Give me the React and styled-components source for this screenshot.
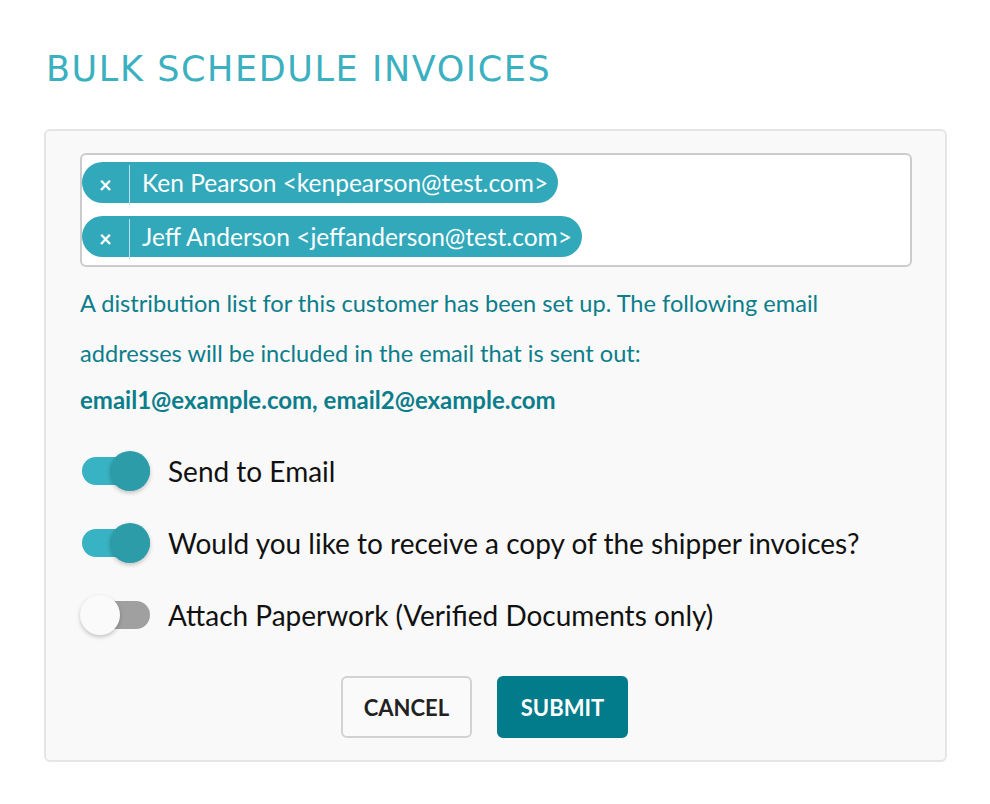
import styled, { createGlobalStyle } from 'styled-components';

const GlobalStyle = createGlobalStyle`
    body {
        margin: 0;
        background: #ffffff;
        font-family: Lato, "Open Sans", sans-serif;
    }
`;

const recipients = [
    { name: 'Ken Pearson', email: 'kenpearson@test.com' },
    { name: 'Jeff Anderson', email: 'jeffanderson@test.com' },
];

const options = [
    { label: 'Send to Email', on: true },
    { label: 'Would you like to receive a copy of the shipper invoices?', on: true },
    { label: 'Attach Paperwork (Verified Documents only)', on: false },
];

export default function App() {
    return (
        <Page>
            <GlobalStyle />
            <Title>BULK SCHEDULE INVOICES</Title>
            <Panel>
                <ChipBox>
                    {recipients.map((r) => (
                        <Chip key={r.email}>
                            <ChipRemove>×</ChipRemove>
                            <ChipLabel>{`${r.name} <${r.email}>`}</ChipLabel>
                        </Chip>
                    ))}
                </ChipBox>
                <Notice>
                    A distribution list for this customer has been set up. The following email
                    addresses will be included in the email that is sent out:
                </Notice>
                <Emails>email1@example.com, email2@example.com</Emails>
                <Options>
                    {options.map((o) => (
                        <OptionRow key={o.label}>
                            <Switch $on={o.on}>
                                <Knob $on={o.on} />
                            </Switch>
                            <OptionLabel>{o.label}</OptionLabel>
                        </OptionRow>
                    ))}
                </Options>
                <Actions>
                    <Button>CANCEL</Button>
                    <Button $primary>SUBMIT</Button>
                </Actions>
            </Panel>
        </Page>
    );
}

const Page = styled.div`
    padding: 46px 43px 40px 44px;
`;

const Title = styled.h1`
    margin: 0 0 37px 2px;
    font-family: "DejaVu Sans", Lato, sans-serif;
    font-weight: 400;
    font-size: 35px;
    line-height: 46px;
    letter-spacing: 1.6px;
    color: #3ab0c0;
`;

const Panel = styled.div`
    background: #f9f9f9;
    border: 2px solid #e4e6e6;
    border-radius: 6px;
    padding: 22px 33px 22px 34px;
`;

const ChipBox = styled.div`
    background: #ffffff;
    border: 2px solid #cccccc;
    border-radius: 6px;
    padding: 7px 0 8px 0;
    display: flex;
    flex-direction: column;
    align-items: flex-start;
    gap: 13px;
`;

const Chip = styled.div`
    display: flex;
    align-items: center;
    height: 41px;
    border-radius: 21px;
    background: #31a9bb;
    color: #ffffff;
    padding-right: 10px;
`;

const ChipRemove = styled.span`
    width: 47px;
    height: 40px;
    margin-top: 4px;
    display: flex;
    align-items: center;
    justify-content: center;
    font-size: 22px;
    font-weight: 700;
    border-right: 1px solid #b8dff0;
`;

const ChipLabel = styled.span`
    padding-left: 12px;
    font-size: 24.5px;
    font-weight: 400;
`;

const Notice = styled.p`
    margin: 11px 0 0 0;
    font-size: 23.6px;
    line-height: 50px;
    color: #0b7d8b;
`;

const Emails = styled.p`
    margin: 0;
    font-size: 24px;
    font-weight: 700;
    line-height: 44px;
    color: #0b7d8b;
`;

const Options = styled.div`
    margin-top: 29px;
    display: flex;
    flex-direction: column;
    gap: 32px;
`;

const OptionRow = styled.div`
    display: flex;
    align-items: center;
    height: 40px;
`;

const Switch = styled.div`
    position: relative;
    width: 68px;
    height: 28px;
    margin-left: 2px;
    border-radius: 14px;
    background: ${(p) => (p.$on ? '#38b3c3' : '#a0a0a0')};
`;

const Knob = styled.div`
    position: absolute;
    top: -6px;
    left: ${(p) => (p.$on ? '28px' : '-2px')};
    width: 40px;
    height: 40px;
    border-radius: 50%;
    background: ${(p) => (p.$on ? '#2d9ca9' : '#fafafa')};
    box-shadow: 0 2px 4px rgba(0, 0, 0, 0.22);
`;

const OptionLabel = styled.span`
    margin-left: 18px;
    font-size: 28px;
    color: #111111;
`;

const Actions = styled.div`
    margin-top: 41px;
    padding-right: 23px;
    display: flex;
    justify-content: center;
    gap: 25px;
`;

const Button = styled.button`
    width: 131px;
    height: 62px;
    border-radius: 6px;
    font-family: Lato, sans-serif;
    font-size: 22px;
    font-weight: 700;
    cursor: pointer;
    border: 2px solid ${(p) => (p.$primary ? '#027b8a' : '#d2d2d2')};
    background: ${(p) => (p.$primary ? '#027b8a' : '#fafafa')};
    color: ${(p) => (p.$primary ? '#ffffff' : '#222222')};
`;
